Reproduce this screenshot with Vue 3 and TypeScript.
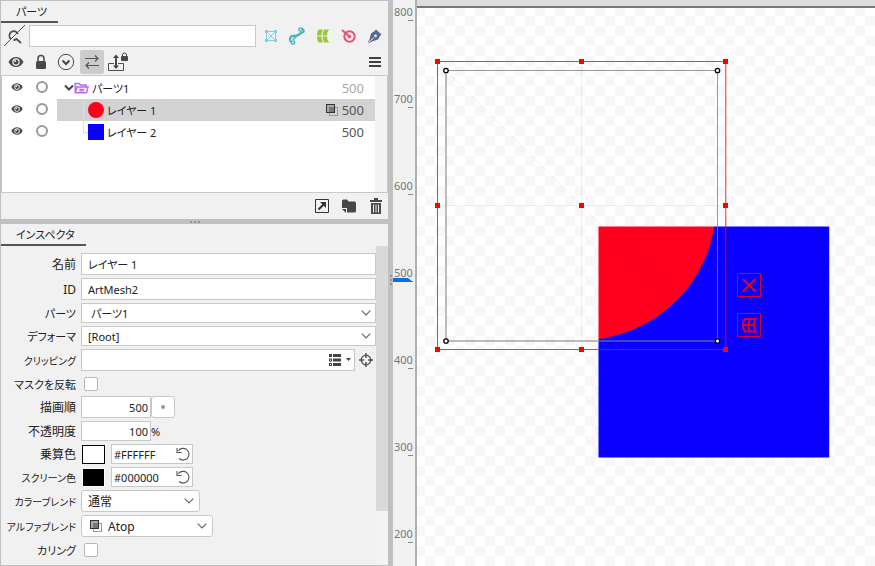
<script setup lang="ts">
import { ref } from 'vue'

interface Layer {
  name: string
  kind: 'circle' | 'square'
  order: number
  atop: boolean
}

const layers = ref<Layer[]>([
  { name: 'レイヤー 1', kind: 'circle', order: 500, atop: true },
  { name: 'レイヤー 2', kind: 'square', order: 500, atop: false },
])
const selected = ref('レイヤー 1')
const search = ref('')
const layerName = ref('レイヤー 1')
const layerId = ref('ArtMesh2')
const clipping = ref('')
const invertMask = ref(false)
const culling = ref(false)
const drawOrder = ref('500')
const opacity = ref('100')
const multiply = ref('#FFFFFF')
const screenColor = ref('#000000')
const marks = [800, 700, 600, 500, 400, 300, 200]
const handles = [
  [437.5, 61.5], [581.5, 61.5], [725.5, 61.5],
  [437.5, 205.5], [581.5, 205.5], [725.5, 205.5],
  [437.5, 349.5], [581.5, 349.5], [725.5, 349.5],
]
const corners = [[446, 70.5], [717.5, 70.5], [446, 341], [717.5, 341]]
</script>

<template>
  <div class="app">
    <svg class="defs" width="0" height="0" aria-hidden="true">
      <symbol id="eye" viewBox="0 0 16 12">
        <path d="M.5 6C2.300 2.700 4.900 1 8 1s5.700 1.700 7.500 5C13.700 9.300 11.100 11 8 11S2.300 9.300.5 6z" fill="#484848" />
        <circle cx="8" cy="6" r="3.700" fill="#f1f1f1" />
        <circle cx="8" cy="6" r="2.500" fill="#484848" />
        <circle cx="7.200" cy="5" r="1" fill="#f1f1f1" />
      </symbol>
      <symbol id="lock" viewBox="0 0 12 16">
        <path d="M3 8V4.500a3 3 0 0 1 6 0V8" fill="none" stroke="#484848" stroke-width="1.500" />
        <rect x="1" y="7" width="10" height="8" rx="1.500" fill="#484848" />
      </symbol>
      <symbol id="chevron" viewBox="0 0 10 6">
        <path d="M.7.7 5 5 9.300.7" fill="none" stroke="#666" stroke-width="1.200" />
      </symbol>
      <symbol id="undo" viewBox="0 0 14 14">
        <path d="M2.300 3.800A5.900 5.900 0 1 1 3 11.500M1 1v4.500h4.600" fill="none" stroke="#555" stroke-width="1.100" />
      </symbol>
      <symbol id="blend" viewBox="0 0 12 12">
        <rect x="3.500" y="3.500" width="8" height="8" fill="none" stroke="#999" />
        <rect x=".5" y=".5" width="8" height="8" fill="#aaa" stroke="#333" />
        <rect x="3" y="3" width="5" height="5" fill="#777" />
      </symbol>
    </svg>

    <aside class="side">
      <section class="panel parts">
        <h2 class="tab tab-parts">パーツ</h2>
        <div class="search-row">
          <button class="icon search-toggle" aria-label="検索">
            <svg width="24" height="24" viewBox="0 0 24 24" fill="none" stroke="#505050">
              <path d="M1 22 22 1" />
              <path d="M7.800 15A4.500 4.500 0 1 1 15 10" stroke-width="1.700" />
              <path d="M10.500 16a4.500 4.500 0 0 0 3-1l4.500 4" stroke-width="1.800" />
            </svg>
          </button>
          <input v-model="search" class="field search" type="text" aria-label="パーツ検索" />
          <div class="filters">
            <button class="icon" aria-label="ワープデフォーマ">
              <svg width="16" height="16" viewBox="0 0 16 16" fill="none" stroke="#7fcfe8">
                <path d="M3.500 3.500h9v9h-9zM3.500 3.500l9 9M12.500 3.500l-9 9" />
                <path d="M2 2h3v3H2zM11 2h3v3h-3zM2 11h3v3H2zM11 11h3v3h-3zM7 7h2v2H7z" fill="#7fcfe8" stroke="none" />
              </svg>
            </button>
            <button class="icon" aria-label="グルー">
              <svg width="18" height="20" viewBox="0 0 18 20" fill="none" stroke="#3db2b8">
                <path d="M2 14.500C1.500 8.500 5.500 10.500 9 9.500S12 6.500 15.500 6" stroke-width="2.200" />
                <path d="M4.500 13.500C7 13.500 5.500 11.500 9 10.500" stroke-width="1.300" />
                <path d="M13.500 2.500c2.500.5 3 2.500 2 4" stroke-width="1.500" />
                <circle cx="12.500" cy="3.500" r="1.700" stroke-width="1.200" />
                <circle cx="5" cy="16.500" r="1.700" stroke-width="1.200" />
                <path d="M2 13.500q0 2 1.500 3" stroke-width="1.500" />
              </svg>
            </button>
            <button class="icon" aria-label="アートメッシュ">
              <svg width="16" height="16" viewBox="0 0 16 16" fill="#9bc838">
                <path d="M3.500 1.500H8q-1.500 3-1.500 6H2q0-4 1.500-6zM9.500 1.500H14q-2 3-2 6H7.500q0-4 2-6zM2 8.500h4.500q0 3 1.500 6H3.500Q2 12.500 2 8.500zM7.500 8.500H12q0 3 2 6H9.500Q7.500 12.500 7.500 8.500z" />
              </svg>
            </button>
            <button class="icon" aria-label="回転デフォーマ">
              <svg width="16" height="16" viewBox="0 0 16 16" fill="none" stroke="#f04e73" stroke-width="2">
                <circle cx="8.500" cy="8.500" r="5.200" /><path d="M1 2 8.500 8.500" /><circle cx="8.500" cy="8.500" r=".8" />
              </svg>
            </button>
            <button class="icon" aria-label="アートパス">
              <svg width="16" height="16" viewBox="0 0 16 16" fill="#5b6890">
                <path d="M9 1.500 14.500 6.500 13 8l-2 3.500-6 2L2.500 15 1 14l1.500-2.500L4 5.500 7.500 3z" />
                <path d="M2 14 7 9.500" stroke="#f1f1f1" /><circle cx="8.500" cy="7.800" r="1.400" fill="#f1f1f1" />
              </svg>
            </button>
          </div>
        </div>
        <div class="toolbar">
          <button class="icon tool" aria-label="表示"><svg width="16" height="12"><use href="#eye" /></svg></button>
          <button class="icon tool" aria-label="ロック"><svg width="12" height="16"><use href="#lock" /></svg></button>
          <button class="icon tool" aria-label="展開">
            <svg width="18" height="18" viewBox="0 0 18 18" fill="none" stroke="#484848">
              <circle cx="9" cy="9" r="7.700" /><path d="M5.500 7.500 9 11l3.500-3.500" stroke-width="2" />
            </svg>
          </button>
          <button class="icon tool active" aria-label="連動">
            <svg width="16" height="16" viewBox="0 0 16 16" fill="none" stroke="#555" stroke-width="1.200">
              <path d="M1 4.500h13M11 1.500l3 3-3 3M15 11.500H2M5 8.500l-3 3 3 3" />
            </svg>
          </button>
          <button class="icon tool" aria-label="親のロック">
            <svg width="22" height="20" viewBox="0 0 22 20">
              <path d="M7 11.500H1.500v7h15v-7H11" fill="none" stroke="#505050" />
              <path d="M9 5v10" stroke="#484848" stroke-width="2" />
              <path d="M9 2.500 12 6H6zM9 17l3-3.500H6z" fill="#484848" />
              <path d="M15.500 4.500V3a2 2 0 0 1 4 0v1.500" fill="none" stroke="#484848" />
              <rect x="14" y="4" width="7" height="5" rx="1" fill="#484848" />
            </svg>
          </button>
          <button class="icon tool menu" aria-label="メニュー">
            <svg width="12" height="10" viewBox="0 0 12 10" fill="#404040"><path d="M0 0h12v2H0zM0 4h12v2H0zM0 8h12v2H0z" /></svg>
          </button>
        </div>

        <div class="tree">
          <ul class="rows">
            <li class="row">
              <button class="icon see" aria-label="パーツ1 表示"><svg width="12" height="10"><use href="#eye" /></svg></button>
              <button class="icon ring" aria-label="パーツ1 ロック"></button>
              <div class="entry folder">
                <svg width="10" height="8" viewBox="0 0 10 8" fill="none" stroke="#444" stroke-width="2"><path d="m1 1.500 4 4 4-4" /></svg>
                <svg width="15" height="12" viewBox="0 0 15 12" fill="none" stroke="#b868f5" stroke-width="1.500">
                  <path d="M1.200 9.500V1.500h4l1.500 1.500h5.500v2M1.200 10.700 3 5h11l-1.500 5.700z" /><path d="M10.500 7.300H6v1.500h4" stroke-width="1.300" />
                </svg>
                <span class="name">パーツ1</span>
                <span class="order dim">500</span>
              </div>
            </li>
            <li v-for="layer in layers" :key="layer.name" class="row">
              <button class="icon see" :aria-label="layer.name + ' 表示'"><svg width="12" height="10"><use href="#eye" /></svg></button>
              <button class="icon ring" :aria-label="layer.name + ' ロック'"></button>
              <div class="entry leaf" :class="{ selected: layer.name === selected }" @click="selected = layer.name">
                <span class="branch" :class="{ last: !layer.atop }"></span>
                <span class="shape" :class="layer.kind"></span>
                <span class="name">{{ layer.name }}</span>
                <svg v-if="layer.atop" class="blend" width="12" height="12"><use href="#blend" /></svg>
                <span class="order">{{ layer.order }}</span>
              </div>
            </li>
          </ul>
          <div class="track"></div>
        </div>
        <div class="footer">
          <button class="icon" aria-label="移動">
            <svg width="14" height="14" viewBox="0 0 14 14" fill="none" stroke="#333">
              <path d="M.5.5h13v13H.5z" /><path d="m3.500 10.500 6-6" stroke-width="2" /><path d="M5 3h6v6z" fill="#333" stroke="none" />
            </svg>
          </button>
          <button class="icon" aria-label="新規パーツ">
            <svg width="16" height="16" viewBox="0 0 16 16" fill="#484848">
              <path d="M1 3q0-1.500 1.500-1.500H6l1.500 2h6Q15 3.500 15 5v8q0 1.500-1.500 1.500H6V10H1zM1 11h4v4z" />
            </svg>
          </button>
          <button class="icon" aria-label="削除">
            <svg width="14" height="18" viewBox="0 0 14 18" fill="#484848">
              <path d="M5 1h4v2h4v2H1V3h4zM2 6h10v11H2z" /><path d="M4.500 7.500v8M7 7.500v8M9.500 7.500v8" stroke="#f1f1f1" />
            </svg>
          </button>
        </div>
      </section>

      <div class="split-h"><i></i><i></i><i></i></div>

      <section class="panel inspector">
        <h2 class="tab tab-inspector">インスペクタ</h2>
        <div class="inspect-body">
          <form class="form" @submit.prevent>
            <div class="line">
              <label for="f-name" class="kanji">名前</label>
              <input id="f-name" v-model="layerName" class="field grow" type="text" />
            </div>
            <div class="line">
              <label for="f-id" class="kanji">ID</label>
              <input id="f-id" v-model="layerId" class="field grow" type="text" />
            </div>
            <div class="line short">
              <label for="f-part">パーツ</label>
              <div class="pick grow">
                <select id="f-part" class="field part"><option>パーツ1</option></select>
                <svg width="10" height="6"><use href="#chevron" /></svg>
              </div>
            </div>
            <div class="line short">
              <label for="f-def">デフォーマ</label>
              <div class="pick grow">
                <select id="f-def" class="field"><option>[Root]</option></select>
                <svg width="10" height="6"><use href="#chevron" /></svg>
              </div>
            </div>
            <div class="line">
              <label for="f-clip" class="dense">クリッピング</label>
              <div class="box grow">
                <input id="f-clip" v-model="clipping" class="bare" type="text" />
                <button class="icon" aria-label="クリッピング一覧">
                  <svg width="22" height="12" viewBox="0 0 22 12" fill="#444">
                    <path d="M4 0h8v3H4zM4 4.500h8v3H4zM4 9h8v3H4zM17 4h5l-2.500 3z" />
                    <path d="M0 0h3v3H0zM0 4.500h3v3H0zM0 9h3v3H0z" /><path d="M1 5.500h1v1H1zM1 10h1v1H1z" fill="#fff" />
                  </svg>
                </button>
              </div>
              <button class="icon target" aria-label="対象を選択">
                <svg width="14" height="14" viewBox="0 0 14 14" fill="none" stroke="#505050">
                  <circle cx="7" cy="7" r="4.800" stroke-width="1.300" /><path d="M7 0v5M7 9v5M0 7h5M9 7h5" stroke-width="1.500" />
                </svg>
              </button>
            </div>
            <div class="line tick">
              <label for="f-mask">マスクを反転</label>
              <input id="f-mask" v-model="invertMask" class="check" type="checkbox" />
            </div>
            <div class="line">
              <label for="f-order" class="kanji">描画順</label>
              <input id="f-order" v-model="drawOrder" class="field number" type="text" />
              <button class="dot" aria-label="描画順キー"><i></i></button>
            </div>
            <div class="line short">
              <label for="f-opacity" class="kanji">不透明度</label>
              <input id="f-opacity" v-model="opacity" class="field number" type="text" />
              <span class="unit">%</span>
            </div>
            <div class="line short">
              <label for="f-mul" class="kanji">乗算色</label>
              <button class="swatch white" aria-label="乗算色を選択"></button>
              <div class="box color">
                <input id="f-mul" v-model="multiply" class="bare" type="text" />
                <button class="icon" aria-label="乗算色をリセット"><svg width="14" height="14"><use href="#undo" /></svg></button>
              </div>
            </div>
            <div class="line short">
              <label for="f-scr" class="dense">スクリーン色</label>
              <button class="swatch black" aria-label="スクリーン色を選択"></button>
              <div class="box color">
                <input id="f-scr" v-model="screenColor" class="bare" type="text" />
                <button class="icon" aria-label="スクリーン色をリセット"><svg width="14" height="14"><use href="#undo" /></svg></button>
              </div>
            </div>
            <div class="line">
              <label for="f-cb" class="dense">カラーブレンド</label>
              <div class="pick round cb">
                <select id="f-cb" class="field large"><option>通常</option></select>
                <svg width="10" height="6"><use href="#chevron" /></svg>
              </div>
            </div>
            <div class="line">
              <label for="f-ab" class="dense">アルファブレンド</label>
              <div class="pick round ab">
                <svg class="lead" width="12" height="12"><use href="#blend" /></svg>
                <select id="f-ab" class="field large"><option>Atop</option></select>
                <svg width="10" height="6"><use href="#chevron" /></svg>
              </div>
            </div>
            <div class="line tick">
              <label for="f-cull">カリング</label>
              <input id="f-cull" v-model="culling" class="check" type="checkbox" />
            </div>
          </form>
          <div class="scroll"><div class="thumb"></div></div>
        </div>
      </section>
    </aside>

    <div class="split-v"><i></i><i></i><i></i></div>

    <div class="ruler">
      <div v-for="m in marks" :key="m" class="mark">{{ m }}</div>
      <div class="cursor"></div>
    </div>

    <main class="stage">
      <div class="stage-top"></div>
      <div class="canvas">
        <svg class="art" width="100%" height="100%">
          <defs>
            <pattern id="checker" x="8" y="8" width="20" height="20" patternUnits="userSpaceOnUse">
              <rect width="20" height="20" fill="#fff" />
              <path d="M0 0h10v10H0zM10 10h10v10H10z" fill="#f7f7f7" />
            </pattern>
            <clipPath id="base"><rect x="598.500" y="226.500" width="230.700" height="231" /></clipPath>
          </defs>
          <rect width="100%" height="100%" fill="url(#checker)" />
          <g transform="translate(-417 -8)" fill="none">
            <path d="M714.400 226.500h114.800v231H598.500V338.900z" fill="#0a00ff" />
            <circle cx="581.500" cy="205.500" r="134.500" fill="#ff001e" clip-path="url(#base)" />
            <path d="m446 70.500 232 232" stroke="#3030ff" stroke-opacity=".08" />
            <path d="M581.500 62v287M438 205.500h287" stroke="#f00" stroke-opacity=".08" />
            <path d="M446 70v272M445 341h273" stroke="#808080" stroke-opacity=".52" stroke-width="2" />
            <path d="M446 70.500h271.500V341" stroke="#808080" stroke-opacity=".8" />
            <path d="M725.500 349.500h-288v-288h288" stroke="#f00" stroke-opacity=".8" />
            <path d="M725.700 62v287" stroke="#f00" stroke-opacity=".6" stroke-width="1.400" />
            <rect v-for="(h, i) in handles" :key="i" :x="h[0] - 2.5" :y="h[1] - 2.5" width="5" height="5" fill="#f00" />
            <circle v-for="(c, i) in corners" :key="'c' + i" :cx="c[0]" :cy="c[1]" r="2.200" fill="#fff" stroke="#000" stroke-width="1.300" />
            <g stroke="#d70032">
              <path d="M737.500 273.500h23v23h-23zM737.500 313.500h23v23h-23z" />
              <path d="m743 279 12.500 12.500M755.500 279 743 291.500" stroke="#f00018" stroke-width="2" />
              <path d="M745 319h10.500q-3 6 0 12.500H745q-4.500-6.500 0-12.500zM743 325h11M749.500 319q-2 6 0 12.500" stroke="#e00028" stroke-width="1.900" />
            </g>
          </g>
        </svg>
      </div>
    </main>
  </div>
</template>

<style>
body {
  overflow: hidden;
}
</style>

<style scoped>
* {
  box-sizing: border-box;
}
.app {
  display: grid;
  grid-template-columns: 388px 5px 24px 1fr;
  height: 100vh;
  background: #c0c0c0;
  color: #222;
  font: 11px "Noto Sans", "Noto Sans CJK JP", sans-serif;
  font-feature-settings: "palt";
}
.defs {
  position: absolute;
}
svg {
  display: block;
  flex: none;
}
button, input, select {
  margin: 0;
  padding: 0;
  color: inherit;
  font: inherit;
  font-feature-settings: inherit;
}
.icon {
  display: flex;
  align-items: center;
  justify-content: center;
  border: 0;
  background: none;
}
.side {
  display: flex;
  flex-direction: column;
  min-height: 0;
  padding: 1px 0 1px 1px;
}
.panel {
  background: #f1f1f1;
}
.tab {
  flex: none;
  margin: 0;
  height: 22px;
  padding-left: 15px;
  border-bottom: 2px solid #555;
  font-size: 11px;
  font-weight: 400;
  line-height: 22px;
}
.tab-parts {
  width: 57px;
}
.tab-inspector {
  width: 85px;
}
.field {
  height: 100%;
  min-width: 0;
  padding: 0 6px;
  border: 1px solid #c8c8c8;
  border-radius: 0;
  background: #fff;
  outline: 0;
}
.search-row {
  display: flex;
  align-items: center;
  height: 24px;
  margin-top: 1px;
}
.search-toggle {
  width: 28px;
}
.search {
  flex: 1;
  height: 22px;
}
.filters {
  display: flex;
  padding: 0 0 0 2px;
}
.filters .icon {
  width: 26px;
  height: 22px;
}
.toolbar {
  display: flex;
  gap: 1px;
  height: 27px;
  padding: 2px 0 1px 3px;
}
.tool {
  width: 24px;
  height: 24px;
  border-radius: 2px;
}
.active {
  margin: 0 1px;
  background: #ccc;
}
.menu {
  margin: 0 1px 0 auto;
}
.tree {
  display: flex;
  height: 118px;
  border: 1px solid #c8c8c8;
  background: #fff;
}
.rows {
  flex: 1;
  margin: 0;
  padding: 1px 0 0;
  list-style: none;
}
.row {
  display: flex;
  height: 22px;
}
.see {
  width: 30px;
  height: 20px;
}
.ring {
  width: 12px;
  height: 12px;
  margin: 4px 9px 0 4px;
  border: 2px solid #999;
  border-radius: 50%;
}
.entry {
  display: flex;
  flex: 1;
  align-items: center;
  padding-right: 11px;
}
.folder {
  padding-left: 7px;
}
.leaf {
  padding-left: 26px;
}
.selected {
  background: #d3d3d3;
}
.branch {
  width: 5px;
  height: 22px;
  border-left: 1px solid #ddd;
}
.branch.last {
  height: 12px;
  border-bottom: 1px solid #ddd;
  align-self: flex-start;
}
.shape {
  width: 16px;
  height: 16px;
}
.circle {
  border-radius: 50%;
  background: #ff001e;
}
.square {
  background: #0a00ff;
}
.name {
  flex: 1;
  padding-left: 3px;
}
.blend {
  margin-right: 4px;
}
.order {
  color: #555;
  font-size: 13px;
}
.dim {
  color: #aaa;
}
.track {
  width: 12px;
  background: #f4f4f4;
}
.footer {
  display: flex;
  justify-content: flex-end;
  gap: 12px;
  height: 26px;
  padding-right: 5px;
}
.split-h {
  display: flex;
  justify-content: center;
  gap: 2px;
  height: 5px;
  padding-top: 2px;
}
i {
  width: 2px;
  height: 2px;
  background: #969696;
}
.inspector {
  display: flex;
  flex: 1;
  flex-direction: column;
  min-height: 0;
}
.inspect-body {
  display: flex;
  flex: 1;
  min-height: 0;
}
.form {
  display: flex;
  flex: 1;
  flex-direction: column;
  gap: 3px;
  padding-top: 7px;
}
.line {
  display: flex;
  flex: none;
  align-items: center;
  height: 22px;
}
.short {
  height: 20px;
}
.tick {
  height: 19px;
}
label {
  display: flex;
  flex: none;
  justify-content: flex-end;
  width: 80px;
  padding-right: 5px;
  white-space: nowrap;
}
.kanji {
  font-size: 12px;
}
.dense {
  font-size: 10px;
}
.grow {
  flex: 1;
}
.pick, .box {
  display: flex;
  align-items: center;
  height: 100%;
  border: 1px solid #c8c8c8;
  background: #fff;
}
.pick {
  padding-right: 4px;
}
.pick .field {
  flex: 1;
  border: 0;
  background: none;
  appearance: none;
}
.pick .part {
  padding-left: 9px;
}
.pick .large {
  font-size: 12px;
}
.round {
  padding-right: 5px;
  border-radius: 3px;
}
.lead {
  margin-left: 8px;
}
.cb {
  width: 119px;
}
.ab {
  width: 132px;
}
.bare {
  flex: 1;
  min-width: 0;
  height: 100%;
  border: 0;
  background: none;
  outline: 0;
}
.box {
  padding: 0 3px;
}
.color {
  width: 82px;
  padding: 0 2px;
}
.target {
  width: 21px;
}
.check {
  width: 14px;
  height: 14px;
  margin-left: 3px;
  border: 1px solid #b8b8b8;
  border-radius: 2px;
  background: #fff;
  appearance: none;
}
.check:checked {
  background: #555;
}
.number {
  width: 70px;
  padding: 0 2px;
  text-align: right;
}
.dot {
  display: flex;
  align-items: center;
  justify-content: center;
  width: 24px;
  height: 22px;
  border: 1px solid #c8c8c8;
  border-radius: 3px;
  background: #fff;
}
.dot i {
  width: 4px;
  height: 4px;
  border-radius: 50%;
}
.swatch {
  width: 23px;
  height: 19px;
  margin: 0 6px 0 1px;
  border: 1px solid #000;
}
.white {
  background: #fff;
}
.black {
  border-color: #fff;
  background: #000;
}
.scroll {
  width: 12px;
  background: #f4f4f4;
}
.thumb {
  height: 83%;
  background: #dadada;
}
.split-v {
  display: flex;
  flex-direction: column;
  align-items: center;
  justify-content: center;
  gap: 2px;
  padding-bottom: 6px;
}
.ruler {
  position: relative;
  overflow: hidden;
  min-height: 0;
  padding-top: 4px;
  border-right: 2px solid #b0b0b0;
  background: #f1f1f1;
  color: #777;
  line-height: 16px;
}
.mark {
  height: 87px;
  padding-left: 1px;
}
.mark::after {
  display: block;
  width: 5px;
  height: 1px;
  margin-left: 14px;
  background: #888;
  content: "";
}
.cursor {
  position: absolute;
  top: 278px;
  left: 0;
  width: 20px;
  height: 4px;
  background: #0a6ee6;
  clip-path: polygon(0 0, 75% 0, 100% 100%, 0 100%);
}
.stage {
  display: flex;
  flex-direction: column;
  min-width: 0;
}
.stage-top {
  flex: none;
  height: 8px;
  border-bottom: 2px solid #777;
  background: #ddd;
}
.canvas {
  flex: 1;
  min-height: 0;
}
</style>
